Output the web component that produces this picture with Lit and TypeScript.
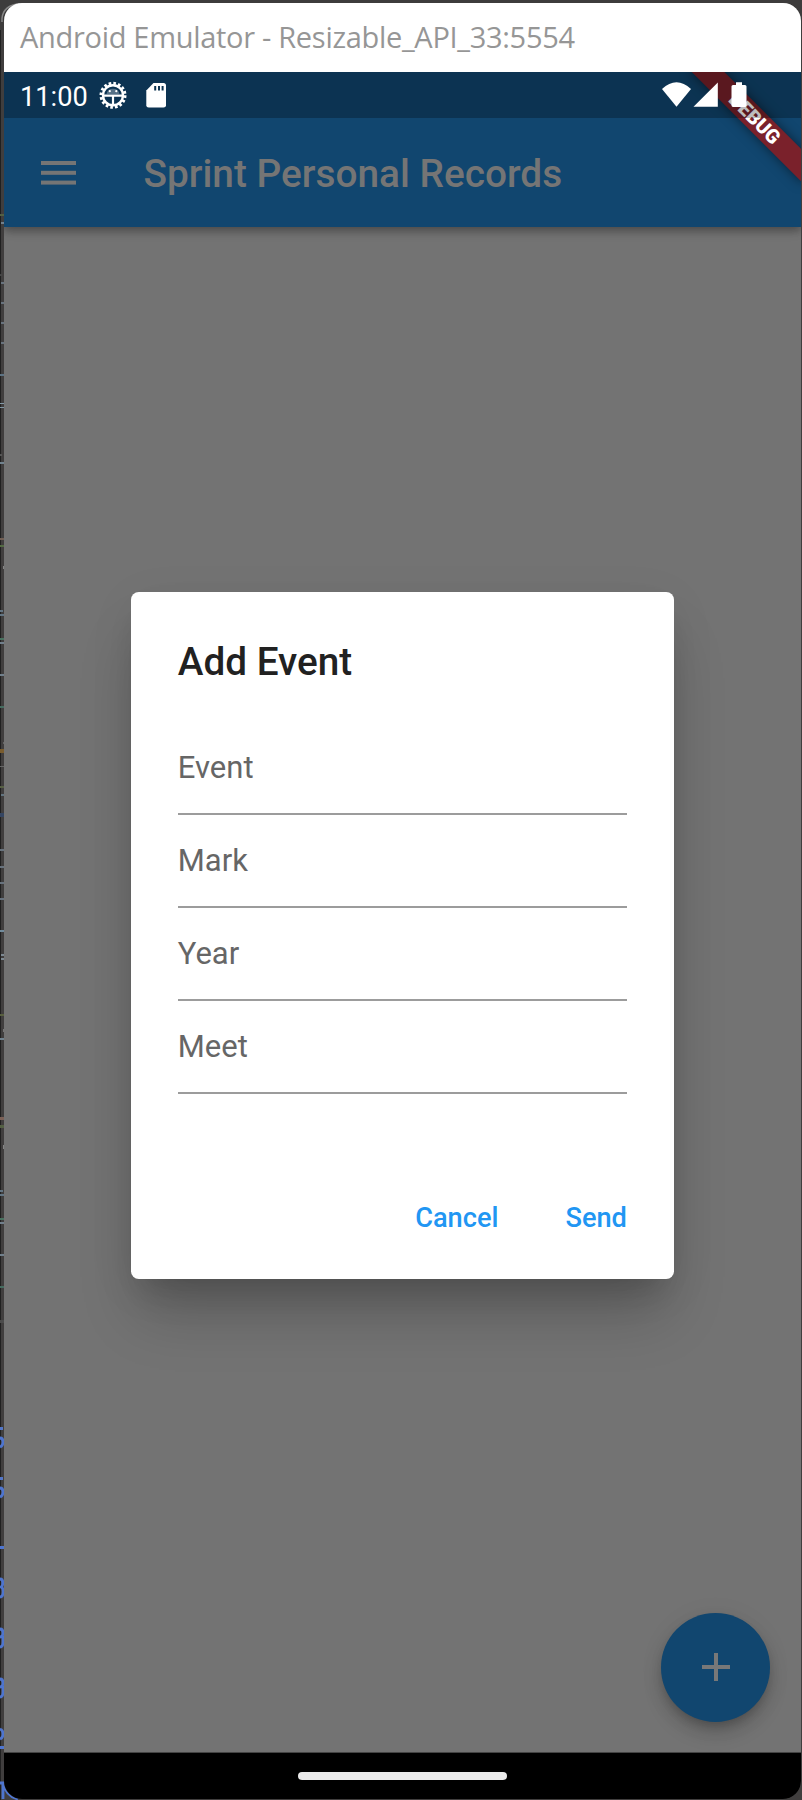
import { LitElement, html, svg, css } from "lit";
import { customElement, state } from "lit/decorators.js";

type Mark = [number, number, number, number, string];

/* Slivers of the editor window visible beside the emulator: x, y, width, height, colour. */
const SLIVERS: Mark[] = [
  [0, 214, 4, 2, "#536043"], [1, 222, 3, 2, "#71808c"], [0, 274, 2, 2, "#454545"],
  [1, 282, 3, 2, "#68737e"], [1, 302, 3, 2, "#68737e"], [1, 322, 3, 2, "#68737e"],
  [1, 342, 3, 2, "#68737e"], [0, 374, 4, 2, "#5d7384"], [0, 403, 4, 1, "#8298a6"],
  [0, 407, 4, 1, "#8298a6"], [0, 454, 2, 2, "#555"], [0, 462, 4, 2, "#71838f"],
  [0, 538, 4, 2, "#725f54"], [0, 545, 4, 2, "#536b43"], [3, 566, 1, 3, "#858585"],
  [0, 610, 3, 2, "#637583"], [0, 614, 4, 2, "#637583"], [0, 638, 4, 2, "#497260"],
  [0, 642, 4, 2, "#71808c"], [0, 674, 4, 2, "#71808c"], [0, 706, 4, 2, "#456c60"],
  [3, 742, 1, 2, "#666"], [0, 749, 4, 4, "#795c2e"], [0, 766, 4, 1, "#666"],
  [0, 786, 4, 2, "#576044"], [1, 794, 3, 2, "#627480"], [0, 813, 4, 4, "#344562"],
  [0, 849, 4, 2, "#68737e"], [0, 866, 4, 2, "#68737e"], [0, 882, 4, 2, "#68737e"],
  [0, 898, 4, 2, "#68737e"], [0, 930, 4, 2, "#718b9c"], [1, 954, 3, 2, "#7d8992"],
  [1, 958, 3, 2, "#7d8992"], [0, 1014, 4, 2, "#58603f"], [3, 1029, 1, 3, "#777"],
  [0, 1038, 4, 2, "#71838f"], [0, 1117, 4, 3, "#7c6157"], [0, 1125, 4, 3, "#536043"],
  [3, 1145, 1, 4, "#858585"], [0, 1190, 3, 2, "#637583"], [0, 1194, 4, 2, "#637583"],
  [0, 1218, 4, 2, "#497260"], [0, 1222, 4, 2, "#71808c"], [0, 1254, 4, 2, "#71808c"],
  [0, 1286, 4, 2, "#456c60"], [0, 1320, 4, 3, "#4b4b4b"],
  [0, 1427, 3, 3, "#5377c8"], [0, 1477, 3, 3, "#5377c8"], [0, 1546, 4, 3, "#4e75cf"],
  [0, 1746, 4, 3, "#4e75cf"],
];

/* Right halves of line numbers peeking out at the left edge. */
const CURVES = [
  "M0 1438Q3 1438 3 1442T0 1447",
  "M0 1488Q3 1488 3 1492T0 1497",
  "M0 1579C4 1579 3 1586 1 1587C4 1588 4 1597 0 1597",
  "M0 1629C4 1629 4 1637 0 1637M3 1636V1642Q3 1647 0 1647",
  "M0 1679C4 1679 4 1687 0 1687M3 1686V1692Q3 1697 0 1697",
  "M0 1729Q3 1730 3 1734T0 1739",
  "M0 1783H3V1799M4 1784Q6 1796 18 1799",
];

@customElement("text-field")
class TextField extends LitElement {
  static properties = { label: {} };
  declare label: string;
  static styles = css`
    :host { display: block; height: 93px; box-sizing: border-box; }
    .field {
      height: 69.6px; box-sizing: border-box; border-bottom: 2px solid #9c9c9c;
      font-size: 31px; line-height: 36px; padding-top: 4.5px; color: #666;
    }
  `;
  render() {
    return html`<div class="field">${this.label}</div>`;
  }
}

@customElement("app-root")
class AppRoot extends LitElement {
  @state() private fields = ["Event", "Mark", "Year", "Meet"];

  static styles = css`
    :host {
      display: block; position: relative; width: 802px; height: 1800px; overflow: hidden;
      background: linear-gradient(90deg, #202020 1px, #403e3e 1px);
      font-family: Roboto, sans-serif;
    }
    .slivers { position: absolute; left: 0; top: 0; }
    .window {
      position: relative; box-sizing: border-box; width: 797px; height: 1796px;
      margin: 3px 1px 0 4px; border-radius: 18px; overflow: hidden;
      display: flex; flex-direction: column; background: #737373;
    }
    .caption {
      height: 69px; flex: none; box-sizing: border-box; background: #fff; color: #969696;
      padding: 14px 0 0 16px; font: 400 29px/40px "Open Sans", sans-serif; white-space: nowrap;
      letter-spacing: -.3px;
    }
    .screen { position: relative; flex: none; height: 1680px; display: flex; flex-direction: column; overflow: hidden; }
    .top { position: relative; flex: none; background: #11466f; box-shadow: 0 4px 8px rgba(0,0,0,.28), 0 1px 14px rgba(0,0,0,.14); }
    .status {
      height: 46px; display: flex; align-items: center; color: #fff; background: rgba(0,0,0,.26);
      font-size: 27.2px; position: relative; z-index: 2;
    }
    .time { padding-left: 16px; width: 72px; line-height: 46px; padding-top: 4px; }
    .left-icons { display: block; }
    .right-icons { display: block; margin-left: auto; }
    .bar { height: 109px; display: flex; align-items: center; color: #757575; }
    .menu { margin-left: 36.5px; width: 35px; height: 24px; }
    .title { margin-left: 67.9px; font-size: 38.8px; font-weight: 500; line-height: 46px; padding-top: 3px; white-space: nowrap; }
    .banner-clip { position: absolute; right: 0; top: 0; width: 140px; height: 140px; overflow: hidden; z-index: 1; }
    .banner {
      position: absolute; left: 13.8px; top: 35.1px; width: 159px; height: 23.2px;
      transform: rotate(45deg); background: #7a212b; color: #fff; text-align: center;
      font-size: 19.8px; font-weight: 900; line-height: 24px;
      box-shadow: 0 0 12px rgba(0,0,0,.5);
    }
    .body { flex: 1; display: flex; flex-direction: column; align-items: center; padding-top: 364.7px; box-sizing: border-box; }
    .dialog {
      width: 542.3px; height: 687.3px; box-sizing: border-box; padding: 46.6px; flex: none; background: #fff;
      border-radius: 7.8px; display: flex; flex-direction: column; margin-right: .3px;
      box-shadow: 0 21px 29px -14px rgba(0,0,0,.14), 0 42px 56px -8px rgba(0,0,0,.2), 0 10px 50px 0 rgba(0,0,0,.06);
    }
    .heading { font-size: 38.7px; font-weight: 500; line-height: 46px; color: #212121; padding-top: .8px; margin-bottom: 60.4px; }
    .actions { display: flex; justify-content: flex-end; gap: 67px; margin-top: auto; font-size: 27.2px; font-weight: 500; line-height: 32px; color: #2196f3; margin-bottom: -2px; }
    .fab {
      margin: auto 31px 30.4px auto; width: 108.6px; height: 108.6px; flex: none; border-radius: 50%;
      background: #11466f; display: grid; place-items: center;
      box-shadow: 0 6px 10px -2px rgba(0,0,0,.18), 0 12px 19px rgba(0,0,0,.14), 0 2px 26px rgba(0,0,0,.06);
    }
    .nav { flex: 1; background: #000; border-top: 1px solid #444; display: flex; justify-content: center; align-items: flex-start; }
    .pill { width: 209.5px; height: 8.4px; border-radius: 5px; background: #ebebeb; margin: 18.6px 0 0 0; }
  `;

  render() {
    return html`
      <svg class="slivers" width="802" height="1800">
        <rect width="802" height="30" fill="#3d3c3c" />
        <path d="M2 22Q1 7 17 4" fill="none" stroke="#888" stroke-width="1.5" />
        ${SLIVERS.map(([x, y, w, h, c]) => svg`<rect x=${x} y=${y} width=${w} height=${h} fill=${c} />`)}
        ${CURVES.map((d) => svg`<path d=${d} fill="none" stroke="#4e75cf" stroke-width="2.8" />`)}
      </svg>
      <div class="window">
        <div class="caption">Android Emulator - Resizable_API_33:5554</div>
        <div class="screen">
          <div class="top">
            <div class="status">
              <span class="time">11:00</span>
              <svg class="left-icons" width="80" height="38" viewBox="92 76 80 38">
                <circle cx="113" cy="95.3" r="10" fill="none" stroke="#fff" stroke-width="2.4" />
                <circle cx="113" cy="95.3" r="12" fill="none" stroke="#fff" stroke-width="3" stroke-dasharray="2.6 2.112" />
                <path d="M106.5 94Q107.5 88.7 113 88.7T119.5 94Z" fill="#fff" fill-opacity=".3" />
                <path d="M103 95.6H123M113 96V106" stroke="#fff" stroke-width="2.2" />
                <circle cx="109.8" cy="91.2" r="1.1" fill="#fff" /><circle cx="116.3" cy="91.2" r="1.1" fill="#fff" />
                <path d="M153.5 83H163.5Q166 83 166 85.5V105.3Q166 107.6 163.5 107.6H148.7Q146.3 107.6 146.3 105.3V90.5Z" fill="#fff" />
                <path d="M155.2 86V90.5M159 86V90.5M162.6 86V90.5" stroke="#0c3351" stroke-width="2" />
              </svg>
              <svg class="right-icons" width="146" height="38" viewBox="655 76 146 38" fill="#fff">
                <path d="M662 89Q676.5 75.6 691 89L676.5 106.7Z" />
                <path d="M693.5 106.7L717.8 82.5V106.7Z" />
                <path d="M736 82.3H742V85H745Q746.5 85 746.5 86.5V105.3Q746.5 107 745 107H733Q731.5 107 731.5 105.3V86.5Q731.5 85 733 85H736Z" />
              </svg>
            </div>
            <div class="bar">
              <svg class="menu" viewBox="0 0 35 24" fill="#757575">
                <rect width="35" height="4" /><rect y="9.8" width="35" height="4" /><rect y="19.6" width="35" height="4" />
              </svg>
              <div class="title">Sprint Personal Records</div>
            </div>
            <div class="banner-clip"><div class="banner">DEBUG</div></div>
          </div>
          <div class="body">
            <div class="dialog">
              <div class="heading">Add Event</div>
              ${this.fields.map((f) => html`<text-field .label=${f}></text-field>`)}
              <div class="actions"><span>Cancel</span><span>Send</span></div>
            </div>
            <div class="fab">
              <svg width="28" height="28" viewBox="0 0 28 28"><path d="M14 0V28M0 14H28" stroke="#787878" stroke-width="4" /></svg>
            </div>
          </div>
        </div>
        <div class="nav"><div class="pill"></div></div>
      </div>
    `;
  }
}
